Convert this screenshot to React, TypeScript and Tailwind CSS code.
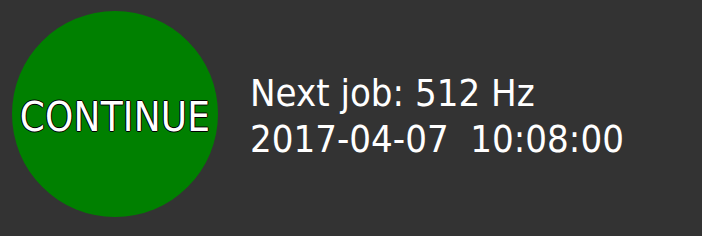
import React from 'react';

const App: React.FC = () => {
  return (
    <div
      className="w-[702px] h-[236px] bg-[#333333] flex items-start pt-[11px] pl-[12px] overflow-hidden"
      style={{ fontFamily: '"DejaVu Sans Condensed", "DejaVu Sans", sans-serif' }}
    >
      {/* Continue button */}
      <button className="w-[206px] h-[206px] rounded-full bg-[#008000] flex items-center justify-center shrink-0 pt-[6px]">
        <span className="text-white text-[40px] leading-none tracking-[0.2px] [text-shadow:-1px_0_#000,1px_0_#000,0_-1px_#000,0_1px_#000]">
          CONTINUE
        </span>
      </button>

      {/* Job info */}
      <div className="ml-[32px] mt-[59px] flex flex-col text-white text-[38px] leading-[46px] whitespace-pre">
        <span>Next job: 512 Hz</span>
        <span>2017-04-07  10:08:00</span>
      </div>
    </div>
  );
};

export default App;
